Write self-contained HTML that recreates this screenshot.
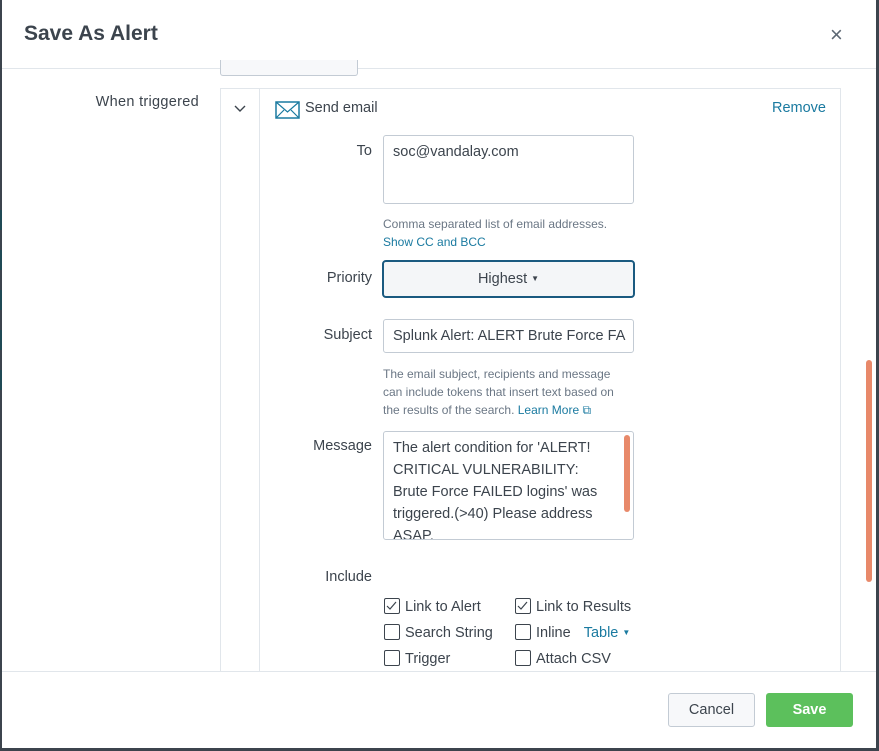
<!DOCTYPE html>
<html><head><style>
*{box-sizing:border-box;margin:0;padding:0}
body{width:879px;height:751px;background:#3c444d;position:relative;overflow:hidden;font-family:"Liberation Sans",sans-serif;color:#3c444d}
.modal{position:absolute;left:2px;top:0;width:874px;height:748px;background:#fff}
.abs{position:absolute}
.lbl{position:absolute;font-size:14.5px;color:#3c444d;text-align:right}
.box{position:absolute;border:1px solid #c3cbd4;border-radius:3px;background:#fff;font-size:14.5px;color:#3c444d}
.help{position:absolute;font-size:12px;color:#6b7785;line-height:18px}
.link{color:#1a7aa0}
.cb{position:absolute;width:16px;height:16px;border:1px solid #3c444d;border-radius:2px}
.cbl{position:absolute;font-size:14.5px;color:#3c444d}
</style></head><body>
<div class="abs" style="left:0;top:210px;width:2px;height:20px;background:#1f4a55"></div>
<div class="abs" style="left:0;top:250px;width:2px;height:20px;background:#1f4a55"></div>
<div class="abs" style="left:0;top:290px;width:2px;height:20px;background:#1f4a55"></div>
<div class="abs" style="left:0;top:330px;width:2px;height:20px;background:#1f4a55"></div>
<div class="abs" style="left:0;top:370px;width:2px;height:20px;background:#1f4a55"></div>
<div class="modal">
 <div class="abs" style="left:22px;top:22px;font-size:21px;font-weight:bold;color:#3c444d">Save As Alert</div>
 <div class="abs" style="left:828px;top:23px;font-size:22px;color:#5c6773;line-height:24px">×</div>
 <div class="abs" style="left:0;top:68px;width:874px;height:1px;background:#e1e6eb"></div>
 <div class="abs" style="left:218px;top:60px;width:138px;height:16px;border:1px solid #c3cbd4;border-top:none;border-radius:0 0 3px 3px;background:#f7f8fa"></div>
 <div class="lbl" style="left:60px;top:94px;width:137px;letter-spacing:0.3px">When triggered</div>
 <div class="abs" style="left:218px;top:88px;width:621px;height:600px;border:1px solid #e1e6eb;border-bottom:none"></div>
 <div class="abs" style="left:257px;top:88px;width:1px;height:600px;background:#e1e6eb"></div>
 <svg class="abs" style="left:232px;top:103px" width="12" height="10"><path d="M1 3 L6 8 L11 3" fill="none" stroke="#3c444d" stroke-width="1.4"/></svg>
 <svg class="abs" style="left:273px;top:101px" width="25" height="18"><rect x="1" y="1" width="23" height="16" fill="none" stroke="#1a7aa0" stroke-width="1.5"/><path d="M1 1 L12.5 11 L24 1 M1 17 L9 9 M24 17 L16 9" fill="none" stroke="#1a7aa0" stroke-width="1.2"/></svg>
 <div class="abs" style="left:303px;top:100px;font-size:14.5px">Send email</div>
 <div class="abs link" style="left:770px;top:100px;font-size:14.5px">Remove</div>
 <div class="lbl" style="left:300px;top:143px;width:70px">To</div>
 <div class="box" style="left:381px;top:135px;width:251px;height:69px;padding:8px 9px">soc@vandalay.com</div>
 <div class="help" style="left:381px;top:215px">Comma separated list of email addresses.<br><span class="link">Show CC and BCC</span></div>
 <div class="lbl" style="left:300px;top:270px;width:70px">Priority</div>
 <div class="abs" style="left:380px;top:260px;width:253px;height:38px;border:2px solid #1a5a80;border-radius:4px;background:#f4f6f8;font-size:14.5px;text-align:center;line-height:34px;color:#3c444d">Highest <span style="font-size:8px;vertical-align:2px">▼</span></div>
 <div class="lbl" style="left:290px;top:327px;width:80px">Subject</div>
 <div class="box" style="left:381px;top:319px;width:251px;height:34px;padding:8px 9px;white-space:nowrap;overflow:hidden">Splunk Alert: ALERT Brute Force FA</div>
 <div class="help" style="left:381px;top:365px">The email subject, recipients and message<br>can include tokens that insert text based on<br>the results of the search. <span class="link">Learn More ⧉</span></div>
 <div class="lbl" style="left:290px;top:438px;width:80px">Message</div>
 <div class="box" style="left:381px;top:431px;width:251px;height:109px;padding:5px 9px 0;line-height:22px;overflow:hidden;white-space:nowrap">The alert condition for 'ALERT!<br>CRITICAL VULNERABILITY:<br>Brute Force FAILED logins' was<br>triggered.(&gt;40) Please address<br>ASAP.</div>
 <div class="abs" style="left:622px;top:435px;width:6px;height:77px;background:#e8896a;border-radius:3px"></div>
 <div class="lbl" style="left:290px;top:569px;width:80px">Include</div>
 <div class="cb" style="left:382px;top:598px"></div><div class="cbl" style="left:403px;top:599px">Link to Alert</div>
 <div class="cb" style="left:513px;top:598px"></div><div class="cbl" style="left:534px;top:599px">Link to Results</div>
 <div class="cb" style="left:382px;top:624px"></div><div class="cbl" style="left:403px;top:625px">Search String</div>
 <div class="cb" style="left:513px;top:624px"></div><div class="cbl" style="left:534px;top:625px">Inline <span class="link" style="margin-left:9px">Table <span style="font-size:8px;vertical-align:2px">▼</span></span></div>
 <div class="cb" style="left:382px;top:650px"></div><div class="cbl" style="left:403px;top:651px">Trigger</div>
 <div class="cb" style="left:513px;top:650px"></div><div class="cbl" style="left:534px;top:651px">Attach CSV</div>
 <svg class="abs" style="left:384px;top:601px" width="12" height="10"><path d="M1 5 L4 8 L10 1" fill="none" stroke="#3c444d" stroke-width="1.2"/></svg>
 <svg class="abs" style="left:515px;top:601px" width="12" height="10"><path d="M1 5 L4 8 L10 1" fill="none" stroke="#3c444d" stroke-width="1.2"/></svg>
 <div class="abs" style="left:864px;top:360px;width:6px;height:222px;background:#e8896a;border-radius:3px"></div>
 <div class="abs" style="left:0;top:671px;width:874px;height:77px;background:#fff;border-top:1px solid #e1e6eb"></div>
 <div class="abs" style="left:666px;top:693px;width:87px;height:34px;border:1px solid #c3cbd4;border-radius:3px;background:#f7f8fa;font-size:14.5px;text-align:center;line-height:32px;color:#3c444d">Cancel</div>
 <div class="abs" style="left:764px;top:693px;width:87px;height:34px;border-radius:3px;background:#5cc05c;font-size:14.5px;font-weight:bold;text-align:center;line-height:34px;color:#fff">Save</div>
</div>
</body></html>
